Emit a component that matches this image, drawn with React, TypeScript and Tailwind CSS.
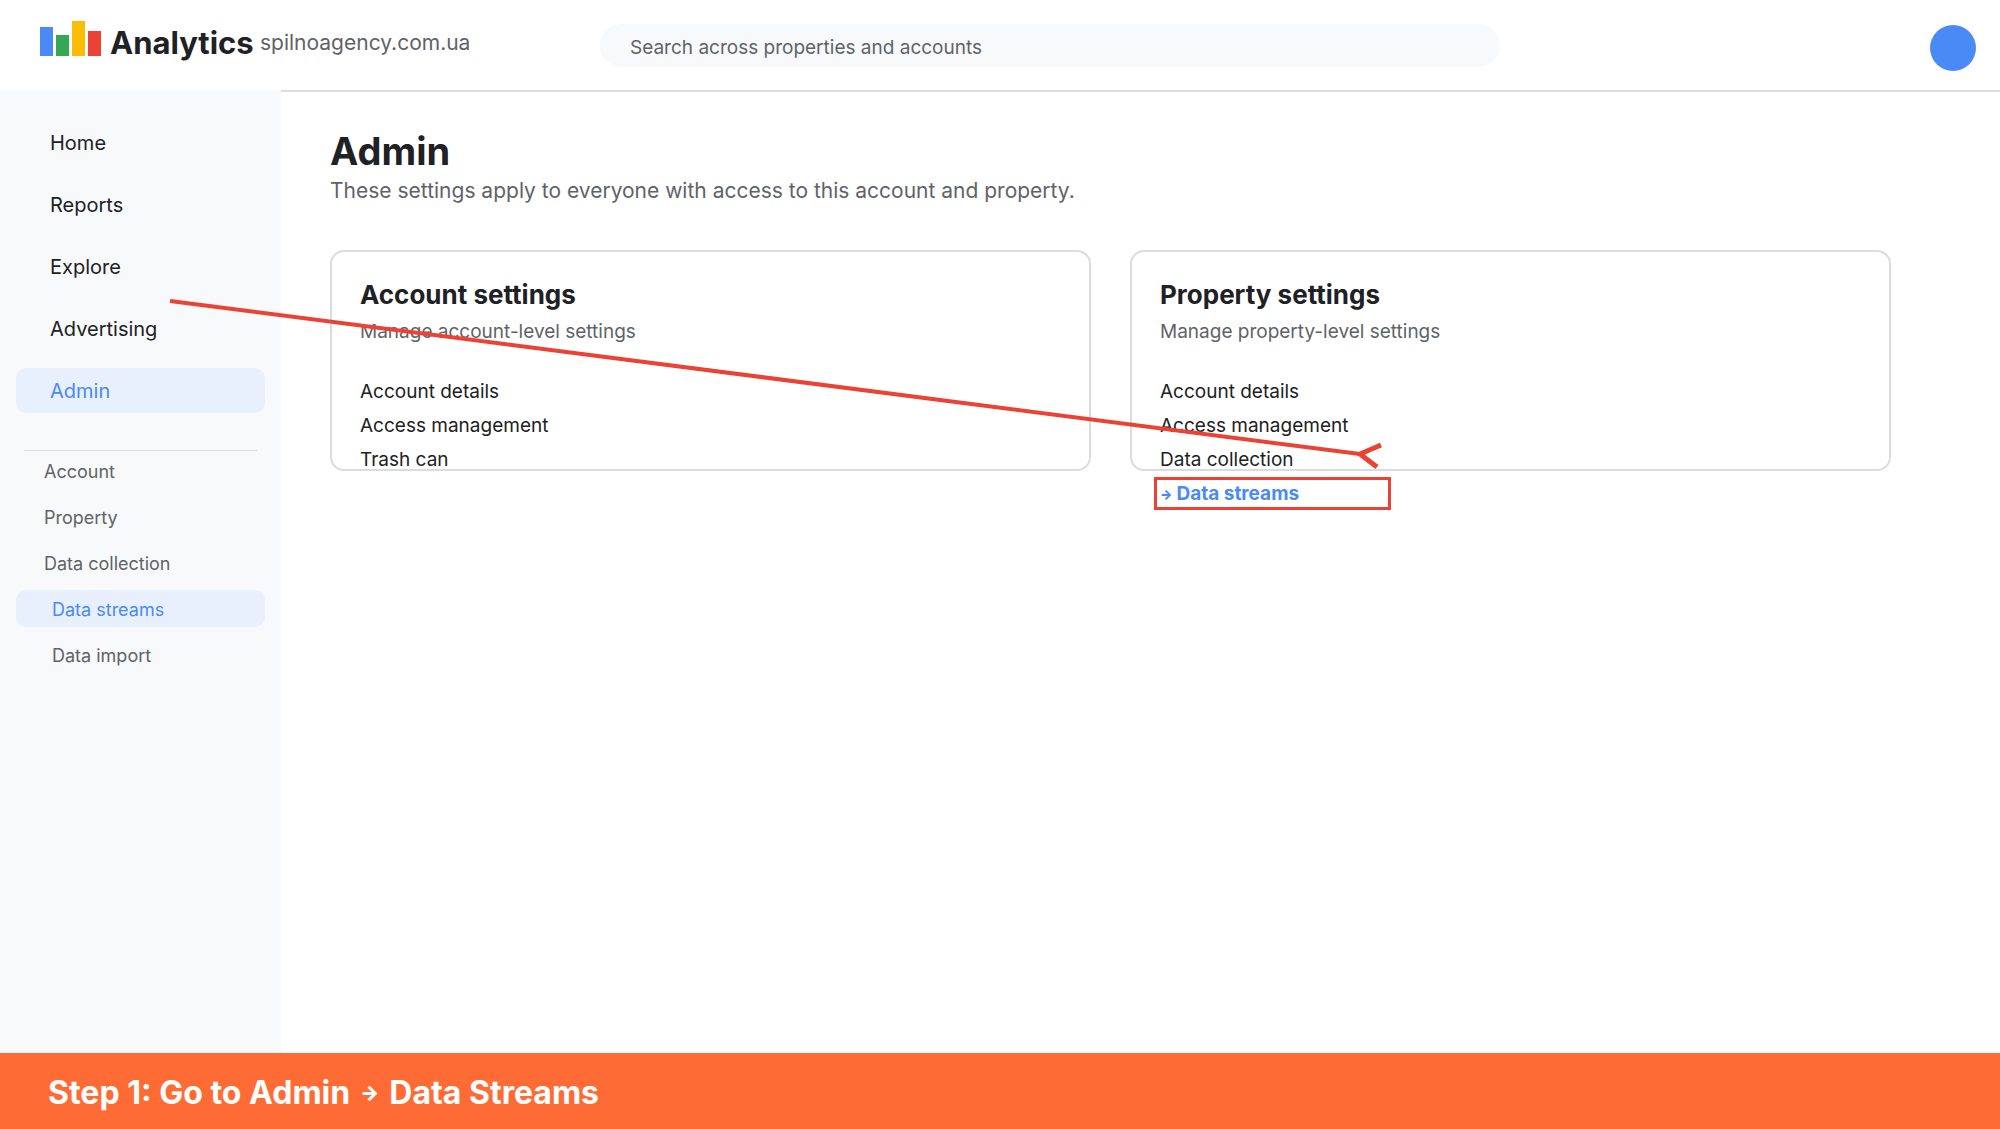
import React, { useState } from 'react';

const navItems = ['Home', 'Reports', 'Explore', 'Advertising', 'Admin'];

const adminItems = [
  { label: 'Account', nested: false },
  { label: 'Property', nested: false },
  { label: 'Data collection', nested: false },
  { label: 'Data streams', nested: true },
  { label: 'Data import', nested: true },
];

function Logo() {
  return (
    <svg width="61" height="35" viewBox="0 0 61 35" aria-hidden="true" className="shrink-0" shapeRendering="crispEdges">
      <rect x="0" y="6" width="13" height="29" fill="#4a8af7" />
      <rect x="16" y="14" width="13" height="21" fill="#34a853" />
      <rect x="32" y="0" width="13" height="35" fill="#fbbc04" />
      <rect x="48" y="10" width="13" height="25" fill="#ea4335" />
    </svg>
  );
}

function Header() {
  const [search, setSearch] = useState('');

  return (
    <header className="flex h-[90px] items-start bg-white">
      <div className="flex w-[30%] items-start pl-10 whitespace-nowrap">
        <div className="pt-[21px]">
          <Logo />
        </div>
        <span className="w-[159px] pt-[22px] pl-[9px] text-[31px] leading-[42px] font-bold text-[#202124]">Analytics</span>
        <span className="pt-[22px] text-[21px] leading-[42px] text-[#5f6368]">spilnoagency.com.ua</span>
      </div>
      <input
        type="search"
        aria-label="Search across properties and accounts"
        placeholder="Search across properties and accounts"
        value={search}
        onChange={(e) => setSearch(e.target.value)}
        className="mt-6 h-[43px] w-[45%] rounded-full bg-[#f8f9fb] px-[30px] pt-[3px] text-[19px] text-[#5f6368] placeholder-[#5f6368] focus:outline-none"
      />
      <button type="button" aria-label="Account menu" className="mt-[25px] mr-6 ml-auto size-[46px] rounded-full bg-[#4a8af7]" />
    </header>
  );
}

function Sidebar() {
  return (
    <aside className="w-[281px] shrink-0 bg-[#f8f9fb] px-4 pt-[30px]">
      <nav aria-label="Main" className="flex flex-col gap-[17px]">
        {navItems.map((item) => (
          <a
            key={item}
            href="#"
            className={`flex h-[45px] items-center rounded-[10px] pl-[34px] text-[20px] ${
              item === 'Admin' ? 'bg-[#e8f0fe] text-[#4a8af7]' : 'text-[#202124]'
            }`}
          >
            {item}
          </a>
        ))}
      </nav>
      <hr className="mx-2 mt-[37px] mb-px border-[#dadce0]" />
      <nav aria-label="Admin sections" className="flex flex-col gap-[9px]">
        {adminItems.map(({ label, nested }) => (
          <a
            key={label}
            href="#"
            className={`flex h-[37px] items-center rounded-[10px] pt-[2px] text-[18px] ${nested ? 'pl-9' : 'pl-7'} ${
              label === 'Data streams' ? 'bg-[#e8f0fe] text-[#4a8af7]' : 'text-[#5f6368]'
            }`}
          >
            {label}
          </a>
        ))}
      </nav>
    </aside>
  );
}

function SettingsCard({ title, description, items, children }: {
  title: string;
  description: string;
  items: string[];
  children?: React.ReactNode;
}) {
  return (
    <section className="h-[221px] rounded-[14px] border-2 border-[#dadce0] px-7 pt-[26px]">
      <h2 className="text-[26px] leading-[34px] font-bold text-[#202124]">{title}</h2>
      <p className="pt-[3px] text-[19px] leading-[34px] text-[#5f6368]">{description}</p>
      <ul className="pt-[26px] text-[19px] leading-[34px] text-[#202124]">
        {items.map((item) => (
          <li key={item}>
            <a href="#">{item}</a>
          </li>
        ))}
        {children}
      </ul>
    </section>
  );
}

// Red pointer from the sidebar to the property card
function Pointer() {
  return (
    <svg
      width="1400"
      height="480"
      viewBox="0 0 1400 480"
      fill="none"
      stroke="#ea4335"
      strokeWidth="4"
      aria-hidden="true"
      className="pointer-events-none absolute top-0 left-0"
    >
      <path d="M170 301 L1360 454" />
      <path d="M1381 445 L1360 454 L1377 467" strokeWidth="5" />
    </svg>
  );
}

export default function App() {
  return (
    <div className="relative flex min-h-screen flex-col bg-white font-[Inter,sans-serif]">
      <Header />
      <div className="flex grow">
        <Sidebar />
        <main className="grow border-t-2 border-[#dadce0] pt-9 pr-[109px] pl-[49px]">
          <h1 className="text-[38px] leading-[46px] font-bold text-[#202124]">Admin</h1>
          <p className="pt-[2px] text-[21px] leading-[30px] text-[#5f6368]">
            These settings apply to everyone with access to this account and property.
          </p>
          <div className="grid grid-cols-2 gap-[39px] pt-11">
            <SettingsCard
              title="Account settings"
              description="Manage account-level settings"
              items={['Account details', 'Access management', 'Trash can']}
            />
            <SettingsCard
              title="Property settings"
              description="Manage property-level settings"
              items={['Account details', 'Access management', 'Data collection']}
            >
              <li className="-ml-[6px] flex h-[33px] w-[237px] items-center border-3 border-[#ea4335] pl-[3px] font-bold text-[#4a8af7]">
                <a href="#" className="flex items-center gap-1">
                  <span className="text-[13px] font-black">→</span>
                  Data streams
                </a>
              </li>
            </SettingsCard>
          </div>
        </main>
      </div>
      <footer className="flex h-[76px] items-center bg-[#ff6b35] px-12 text-[32px] font-bold text-white">
        <p className="flex items-center gap-[10px] pt-[3px]">
          Step 1: Go to Admin <span className="text-[20px] font-black">→</span> Data Streams
        </p>
      </footer>
      <Pointer />
    </div>
  );
}
